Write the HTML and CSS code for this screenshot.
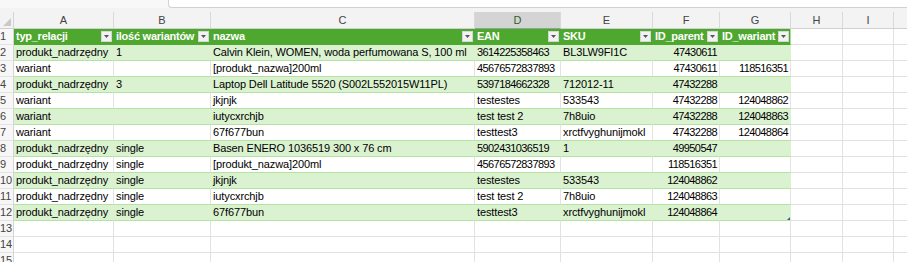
FILE: index.html
```html
<!DOCTYPE html>
<html lang="pl">
<head>
<meta charset="utf-8">
<title>Arkusz</title>
<link rel="stylesheet" href="styles.css">
</head>
<body>
<div class="sheet">
  <div class="topbar">
    <div class="topbar-left"></div>
    <div class="formula-box"></div>
  </div>
  <div class="row colhead">
    <div class="corner"><span class="corner-tri"></span></div>
    <div class="ch">A</div><div class="ch">B</div><div class="ch">C</div><div class="ch sel">D</div><div class="ch">E</div><div class="ch">F</div><div class="ch">G</div><div class="ch">H</div><div class="ch">I</div><div class="ch last"></div>
  </div>

  <div class="row">
    <div class="rh">1</div>
    <div class="c th"><span>typ_relacji</span><span class="dd"><svg width="5" height="3" viewBox="0 0 5 3"><path d="M0 0h5L2.5 3z" fill="#555"/></svg></span></div>
    <div class="c th"><span>ilość wariantów</span><span class="dd"><svg width="5" height="3" viewBox="0 0 5 3"><path d="M0 0h5L2.5 3z" fill="#555"/></svg></span></div>
    <div class="c th"><span>nazwa</span><span class="dd"><svg width="5" height="3" viewBox="0 0 5 3"><path d="M0 0h5L2.5 3z" fill="#555"/></svg></span></div>
    <div class="c th"><span>EAN</span><span class="dd"><svg width="5" height="3" viewBox="0 0 5 3"><path d="M0 0h5L2.5 3z" fill="#555"/></svg></span></div>
    <div class="c th"><span>SKU</span><span class="dd"><svg width="5" height="3" viewBox="0 0 5 3"><path d="M0 0h5L2.5 3z" fill="#555"/></svg></span></div>
    <div class="c th"><span>ID_parent</span><span class="dd"><svg width="5" height="3" viewBox="0 0 5 3"><path d="M0 0h5L2.5 3z" fill="#555"/></svg></span></div>
    <div class="c th edge"><span>ID_wariant</span><span class="dd"><svg width="5" height="3" viewBox="0 0 5 3"><path d="M0 0h5L2.5 3z" fill="#555"/></svg></span></div>
    <div class="c"></div><div class="c"></div><div class="c last"></div>
  </div>

  <div class="row band">
    <div class="rh">2</div>
    <div class="c t">produkt_nadrzędny</div><div class="c t">1</div><div class="c t">Calvin Klein, WOMEN, woda perfumowana S, 100 ml</div><div class="c t d">3614225358463</div><div class="c t">BL3LW9FI1C</div><div class="c t d num">47430611</div><div class="c t edge d num"></div>
    <div class="c"></div><div class="c"></div><div class="c last"></div>
  </div>
  <div class="row plain">
    <div class="rh">3</div>
    <div class="c t">wariant</div><div class="c t"></div><div class="c t">[produkt_nazwa]200ml</div><div class="c t d">45676572837893</div><div class="c t"></div><div class="c t d num">47430611</div><div class="c t edge d num">118516351</div>
    <div class="c"></div><div class="c"></div><div class="c last"></div>
  </div>
  <div class="row band">
    <div class="rh">4</div>
    <div class="c t">produkt_nadrzędny</div><div class="c t">3</div><div class="c t">Laptop Dell Latitude 5520 (S002L552015W11PL)</div><div class="c t d">5397184662328</div><div class="c t">712012-11</div><div class="c t d num">47432288</div><div class="c t edge d num"></div>
    <div class="c"></div><div class="c"></div><div class="c last"></div>
  </div>
  <div class="row plain">
    <div class="rh">5</div>
    <div class="c t">wariant</div><div class="c t"></div><div class="c t">jkjnjk</div><div class="c t">testestes</div><div class="c t">533543</div><div class="c t d num">47432288</div><div class="c t edge d num">124048862</div>
    <div class="c"></div><div class="c"></div><div class="c last"></div>
  </div>
  <div class="row band">
    <div class="rh">6</div>
    <div class="c t">wariant</div><div class="c t"></div><div class="c t">iutycxrchjb</div><div class="c t">test test 2</div><div class="c t">7h8uio</div><div class="c t d num">47432288</div><div class="c t edge d num">124048863</div>
    <div class="c"></div><div class="c"></div><div class="c last"></div>
  </div>
  <div class="row plain">
    <div class="rh">7</div>
    <div class="c t">wariant</div><div class="c t"></div><div class="c t">67f677bun</div><div class="c t">testtest3</div><div class="c t">xrctfvyghunijmokl</div><div class="c t d num">47432288</div><div class="c t edge d num">124048864</div>
    <div class="c"></div><div class="c"></div><div class="c last"></div>
  </div>
  <div class="row band">
    <div class="rh">8</div>
    <div class="c t">produkt_nadrzędny</div><div class="c t">single</div><div class="c t">Basen ENERO 1036519 300 x 76 cm</div><div class="c t d">5902431036519</div><div class="c t">1</div><div class="c t d num">49950547</div><div class="c t edge d num"></div>
    <div class="c"></div><div class="c"></div><div class="c last"></div>
  </div>
  <div class="row plain">
    <div class="rh">9</div>
    <div class="c t">produkt_nadrzędny</div><div class="c t">single</div><div class="c t">[produkt_nazwa]200ml</div><div class="c t d">45676572837893</div><div class="c t"></div><div class="c t d num">118516351</div><div class="c t edge d num"></div>
    <div class="c"></div><div class="c"></div><div class="c last"></div>
  </div>
  <div class="row band">
    <div class="rh">10</div>
    <div class="c t">produkt_nadrzędny</div><div class="c t">single</div><div class="c t">jkjnjk</div><div class="c t">testestes</div><div class="c t">533543</div><div class="c t d num">124048862</div><div class="c t edge d num"></div>
    <div class="c"></div><div class="c"></div><div class="c last"></div>
  </div>
  <div class="row plain">
    <div class="rh">11</div>
    <div class="c t">produkt_nadrzędny</div><div class="c t">single</div><div class="c t">iutycxrchjb</div><div class="c t">test test 2</div><div class="c t">7h8uio</div><div class="c t d num">124048863</div><div class="c t edge d num"></div>
    <div class="c"></div><div class="c"></div><div class="c last"></div>
  </div>
  <div class="row band">
    <div class="rh">12</div>
    <div class="c t">produkt_nadrzędny</div><div class="c t">single</div><div class="c t">67f677bun</div><div class="c t">testtest3</div><div class="c t">xrctfvyghunijmokl</div><div class="c t d num">124048864</div><div class="c t edge d num"><span class="handle"></span></div>
    <div class="c"></div><div class="c"></div><div class="c last"></div>
  </div>

  <div class="row">
    <div class="rh">13</div>
    <div class="c"></div><div class="c"></div><div class="c"></div><div class="c"></div><div class="c"></div><div class="c"></div><div class="c"></div><div class="c"></div><div class="c"></div><div class="c last"></div>
  </div>
  <div class="row">
    <div class="rh">14</div>
    <div class="c"></div><div class="c"></div><div class="c"></div><div class="c"></div><div class="c"></div><div class="c"></div><div class="c"></div><div class="c"></div><div class="c"></div><div class="c last"></div>
  </div>
  <div class="row">
    <div class="rh">15</div>
    <div class="c"></div><div class="c"></div><div class="c"></div><div class="c"></div><div class="c"></div><div class="c"></div><div class="c"></div><div class="c"></div><div class="c"></div><div class="c last"></div>
  </div>
</div>
</body>
</html>
```

FILE: styles.css
```css
html, body {
  margin: 0;
  padding: 0;
  background: #ffffff;
}

.sheet {
  width: 907px;
  height: 262px;
  overflow: hidden;
  font-family: "Liberation Sans", Arial, sans-serif;
  font-size: 11px;
  color: #000;
}

.topbar {
  display: flex;
  height: 12px;
  background: #f3f3f3;
}

.topbar-left {
  width: 168px;
  height: 8px;
  background: #f8f8f8;
}

.formula-box {
  flex: 1;
  height: 7px;
  background: #ffffff;
  border-left: 1px solid #d2d2d2;
  border-bottom: 1px solid #d2d2d2;
  border-bottom-left-radius: 4px;
}

.row {
  display: grid;
  grid-template-columns: 14px 100px 97px 264px 86px 92px 67px 71px 52px 51px 1fr;
  height: 16px;
}

.colhead {
  height: 17px;
  background: #f3f3f3;
}

.corner {
  position: relative;
  box-sizing: border-box;
  border-right: 1px solid #d4d4d4;
  border-bottom: 1px solid #d0d0d0;
}

.corner-tri {
  position: absolute;
  right: 2px;
  bottom: 2px;
  width: 0;
  height: 0;
  border-left: 8px solid transparent;
  border-bottom: 8px solid #c9c9c9;
}

.ch {
  box-sizing: border-box;
  border-right: 1px solid #d9d9d9;
  border-bottom: 1px solid #d0d0d0;
  text-align: center;
  line-height: 16px;
  color: #444;
  font-size: 11px;
}

.ch.sel {
  background: #d4d4d4;
  color: #2f5f2f;
  border-bottom: 1px solid #8aa88a;
}

.ch.last, .c.last {
  border-right: none;
}

.rh {
  box-sizing: border-box;
  background: #f7f7f7;
  border-right: 1px solid #d4d4d4;
  border-bottom: 1px solid #e3e3e3;
  color: #444;
  font-size: 11px;
  line-height: 15px;
  padding-left: 0;
  overflow: hidden;
  white-space: nowrap;
}

.c {
  box-sizing: border-box;
  border-right: 1px solid #e1e1e1;
  border-bottom: 1px solid #e1e1e1;
  line-height: 15px;
  padding: 0 2px;
  white-space: nowrap;
  overflow: hidden;
  position: relative;
  letter-spacing: -0.12px;
}

.c.d {
  letter-spacing: -0.58px;
}

.c.th {
  background: #4ea72e;
  border-right-color: #4ea72e;
  border-bottom-color: #4ea72e;
  color: #ffffff;
  font-weight: bold;
  display: flex;
  align-items: center;
  justify-content: space-between;
  padding-right: 1px;
  letter-spacing: -0.25px;
}

.dd {
  box-sizing: border-box;
  width: 11px;
  height: 11px;
  background: #f2f2f2;
  border: 1px solid #d6d6d6;
  display: flex;
  align-items: center;
  justify-content: center;
  flex: none;
}

.dd svg {
  display: block;
}

.c.t {
  border-bottom-color: #b4e3a1;
}

.band .c.t {
  background: #daf2d0;
  border-right-color: #daf2d0;
}

.plain .c.t {
  border-right-color: #e3e3e3;
}

.c.edge {
  border-right: 1px solid #a9dc94;
}

.c.th.edge {
  border-right-color: #a9dc94;
}

.num {
  text-align: right;
}

.handle {
  position: absolute;
  right: 0;
  bottom: 0;
  width: 0;
  height: 0;
  border-left: 3px solid transparent;
  border-bottom: 3px solid #3b5a94;
}
```
